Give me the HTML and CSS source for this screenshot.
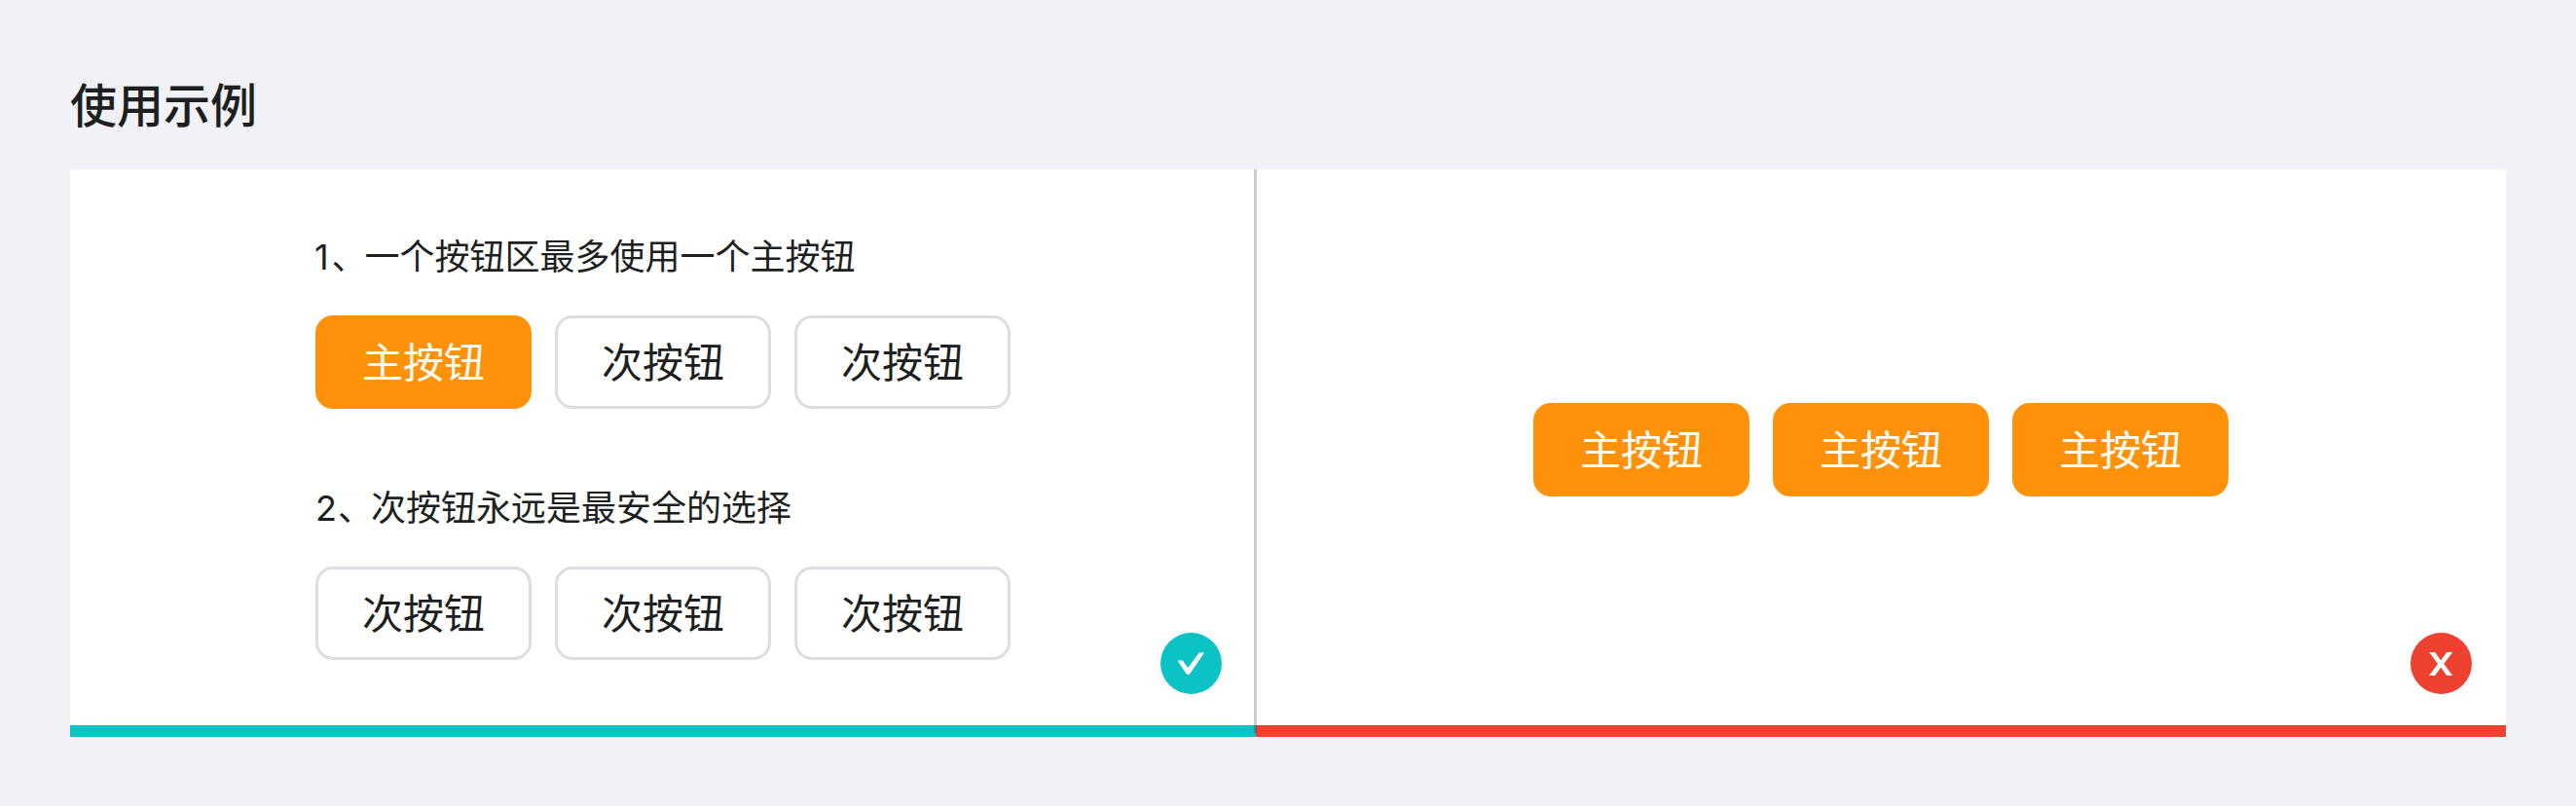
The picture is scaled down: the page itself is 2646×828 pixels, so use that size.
FILE: index.html
```html
<!DOCTYPE html>
<html lang="zh-CN">
<head>
<meta charset="utf-8">
<title>使用示例</title>
<link rel="stylesheet" href="styles.css">
</head>
<body>
<main class="page">
  <h2 class="title">使用示例</h2>
  <div class="panels">
    <section class="panel panel-do">
      <div class="group">
        <p class="rule"><span class="num num-one">1</span><span class="mark">、</span>一个按钮区最多使用一个主按钮</p>
        <div class="buttons">
          <button class="btn btn-primary">主按钮</button>
          <button class="btn">次按钮</button>
          <button class="btn">次按钮</button>
        </div>
      </div>
      <div class="group">
        <p class="rule"><span class="num num-two">2</span><span class="mark">、</span>次按钮永远是最安全的选择</p>
        <div class="buttons">
          <button class="btn">次按钮</button>
          <button class="btn">次按钮</button>
          <button class="btn">次按钮</button>
        </div>
      </div>
      <svg class="badge" viewBox="0 0 63 63"><circle cx="31.5" cy="31.5" r="31.5" fill="#0bc3c5"/><path d="M17.5 28.500h5.300l5.500 7.600L39.700 20.500H45L30.300 42q-2 2.200-4 0z" fill="#fff"/></svg>
    </section>
    <section class="panel panel-dont">
      <div class="buttons">
        <button class="btn btn-primary">主按钮</button>
        <button class="btn btn-primary">主按钮</button>
        <button class="btn btn-primary">主按钮</button>
      </div>
      <svg class="badge" viewBox="0 0 63 63"><circle cx="31.500" cy="31.500" r="31.500" fill="#ee4130"/><path d="M19.200 20h6l6 8.400 6-8.400h6l-8.900 12 8.900 12h-6l-6-8.400-6 8.400h-6l8.900-12z" fill="#fff"/></svg>
    </section>
  </div>
</main>
</body>
</html>
```
FILE: styles.css
```css
* { box-sizing: border-box; }
body {
  margin: 0;
  background: #f1f2f7;
  color: #1d1f20;
  font-family: "Noto Sans CJK SC", sans-serif;
}
.page { height: 828px; padding: 69px 72px 0; }
.title {
  margin: 0 0 33px;
  font-size: 48px;
  line-height: 72px;
  font-weight: 500;
}
.panels { display: flex; height: 582.5px; }
.panel {
  position: relative;
  background: #fff;
  border-bottom: 12px solid;
}
.panel-do {
  width: 1218px;
  padding: 60px 0 0 252px;
  border-bottom-color: #0bc3c5;
}
.panel-do::after {
  content: "";
  position: absolute;
  top: 0;
  right: -1px;
  bottom: -8px;
  z-index: 1;
  width: 3px;
  background: rgba(0, 0, 0, .2);
}
.panel-dont {
  flex: 1;
  padding: 240px 0 0 285px;
  border-bottom-color: #ee4130;
}
.group + .group { margin-top: 72px; }
.rule {
  margin: 0 0 36px;
  font-size: 36px;
  line-height: 54px;
}
.num { display: inline-block; font-family: Inter, sans-serif; font-weight: 400; line-height: 1; }
.num-one { width: 14.5px; text-indent: -1px; }
.num-two { width: 21px; }
.mark { margin: 0 -2px 0 2px; }
.buttons { display: flex; gap: 24px; }
.btn {
  width: 222px;
  height: 96px;
  padding: 0 0 5px;
  border: 3px solid #dcdee2;
  border-radius: 18px;
  background: #fff;
  color: #1d1f20;
  font: 400 42px/85px "Noto Sans CJK SC", sans-serif;
}
.btn-primary { border-color: #ff920a; background: #ff920a; color: #fff; }
.badge {
  position: absolute;
  right: 35px;
  bottom: 32px;
  width: 63px;
  height: 63px;
}
```
